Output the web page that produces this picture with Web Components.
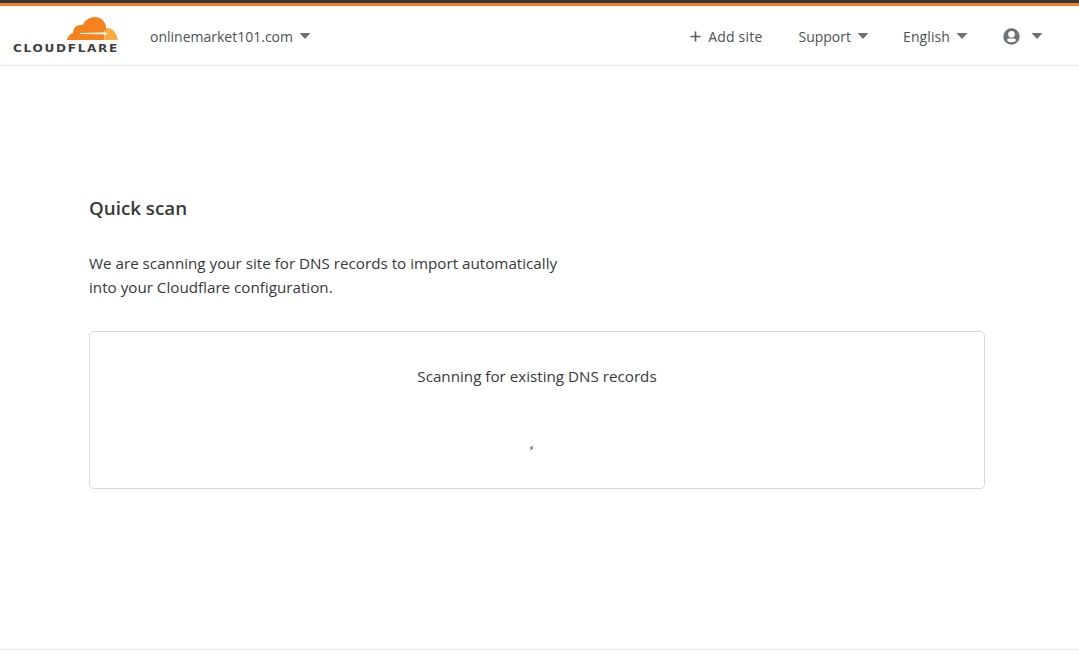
<!DOCTYPE html>
<html lang="en">
<head>
<meta charset="utf-8">
<title>Quick scan</title>
<style>
  html, body { margin: 0; padding: 0; height: 100%; background: #fff; }
  body { font-family: "Open Sans", sans-serif; color: #36393a; }
</style>
</head>
<body>
<cf-app>
  <cf-header slot="header" domain="onlinemarket101.com"></cf-header>
  <cf-scan-page>
    <span slot="title">Quick scan</span>
    <span slot="intro">We are scanning your site for DNS records to import automatically<br>into your Cloudflare configuration.</span>
    <span slot="status">Scanning for existing DNS records</span>
  </cf-scan-page>
</cf-app>

<script>
const caret = `<svg class="caret" width="12" height="6" viewBox="0 0 12 6"><path d="M0.5 0h11L6 6z" fill="#6d7276"/></svg>`;

class CfApp extends HTMLElement {
  constructor() {
    super();
    this.attachShadow({ mode: "open" }).innerHTML = `
    <style>
      :host { display: flex; flex-direction: column; height: 661px; box-sizing: border-box; overflow: hidden; }
      .stripe { height: 3px; background: #36393a; flex: none; }
      .stripe + .stripe { background: #f38020; }
      main { flex: 1; }
      footer { flex: none; height: 11px; border-top: 1px solid #ebebeb; }
    </style>
    <div class="stripe"></div>
    <div class="stripe"></div>
    <slot name="header"></slot>
    <main><slot></slot></main>
    <footer></footer>
    `;
  }
}

class CfHeader extends HTMLElement {
  constructor() {
    super();
    this.attachShadow({ mode: "open" });
  }

  connectedCallback() {
    this.shadowRoot.innerHTML = `
    <style>
      :host { display: flex; align-items: center; height: 60px; box-sizing: border-box; border-bottom: 1px solid #ebebeb; padding: 2px 36px 0 13px; font-size: 14px; color: #4e5255; flex: none; }
      .grow { flex: 1; }
      .domain { margin-left: 32px; display: flex; align-items: center; gap: 6px; }
      .item { display: flex; align-items: center; gap: 6px; margin-left: 36px; }
      .caret { flex: none; margin-top: -2px; }
      .add { margin-left: 0; gap: 7px; letter-spacing: .2px; }
      .lang { letter-spacing: .1px; margin-left: 34px; }
      .user { gap: 11px; margin-left: 35px; }
    </style>
    <cf-logo></cf-logo>
    <div class="domain">${this.getAttribute("domain")} ${caret}</div>
    <div class="grow"></div>
    <div class="item add">
      <svg width="11" height="11" viewBox="0 0 11 11"><path d="M5.5 0.500v10M0.500 5.500h10" stroke="#5f6367" stroke-width="1.700" fill="none"/></svg>
      Add site
    </div>
    <div class="item">Support ${caret}</div>
    <div class="item lang">English ${caret}</div>
    <div class="item user">
      <svg width="17" height="17" viewBox="0 0 18 18"><path fill="#6d7276" fill-rule="evenodd" d="M9 .3a8.700 8.700 0 1 0 0 17.400A8.700 8.700 0 0 0 9 .3zM9 3.200a3.500 3.500 0 1 1 0 7 3.500 3.500 0 0 1 0-7zM9 15.200a6.400 6.400 0 0 1-4.900-2.300c.5-1.200 1.800-2 3-2 .6 0 1 .3 1.900.3s1.300-.3 1.900-.3c1.200 0 2.500.8 3 2A6.400 6.400 0 0 1 9 15.200z"/></svg>
      ${caret}
    </div>
    `;
  }
}

class CfLogo extends HTMLElement {
  constructor() {
    super();
    this.attachShadow({ mode: "open" }).innerHTML = `
    <style>
      :host { display: block; position: relative; width: 105px; height: 36px; margin-top: -3px; }
      svg { position: absolute; left: 54px; top: 0; }
      span { position: absolute; left: 0; top: 24.500px; font: 700 10.800px/13px "DejaVu Sans", sans-serif; letter-spacing: 1.500px; color: #404041; white-space: nowrap; transform: scaleX(1.120); transform-origin: left center; }
    </style>
    <svg width="51" height="23" viewBox="0 0 51 23">
      <path fill="#f6821f" d="M0 23C.5 19.500 3 16.800 6 16.300 6 11 10 7.200 15.500 8.300 18 3 23 0 28 0c5.500 0 10 4 11 9.500.5 2.500.3 5.500-.5 8L36.800 23z"/>
      <path fill="#fbad41" d="M39.500 11C45 10 50 16 51 23H37l1.500-5.200z"/>
      <path fill="#fff" d="M13 16l22-.5 1.800-.2 1.500-2.200-.2 2.700 3.200.9-3.200.7.200 2.400-1.500-2.300-1.800-.2-22-.3z"/>
    </svg>
    <span>CLOUDFLARE</span>
    `;
  }
}

class CfScanPage extends HTMLElement {
  constructor() {
    super();
    this.attachShadow({ mode: "open" }).innerHTML = `
    <style>
      :host { display: block; padding: 130px 94px 0 89px; font-size: 15.200px; line-height: 24px; color: #36393a; }
      h1 { margin: 0 0 31px; font-size: 18.750px; line-height: 24px; font-weight: 600; }
      p { margin: 0 0 32px; width: 500px; }
      cf-card { height: 158px; }
    </style>
    <h1><slot name="title"></slot></h1>
    <p><slot name="intro"></slot></p>
    <cf-card><slot name="status"></slot></cf-card>
    `;
  }
}

class CfCard extends HTMLElement {
  constructor() {
    super();
    this.attachShadow({ mode: "open" }).innerHTML = `
    <style>
      :host { display: flex; flex-direction: column; align-items: center; box-sizing: border-box; border: 1px solid #d9d9d9; border-radius: 5px; padding-top: 32px; }
      .spin { margin-top: 57px; margin-right: 12px; }
    </style>
    <div><slot></slot></div>
    <svg class="spin" width="5" height="6" viewBox="0 0 5 6"><path d="M3.800.3.8 3l1.200.4-.6 2.400L4.400 3l-1.200-.4z" fill="#6d7276"/></svg>
    `;
  }
}

customElements.define("cf-app", CfApp);
customElements.define("cf-header", CfHeader);
customElements.define("cf-logo", CfLogo);
customElements.define("cf-card", CfCard);
customElements.define("cf-scan-page", CfScanPage);
</script>
</body>
</html>
